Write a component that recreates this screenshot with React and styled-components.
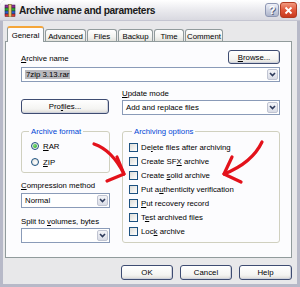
import React from "react";
import styled, { createGlobalStyle } from "styled-components";

const Global = createGlobalStyle`
  html, body {
    margin: 0;
    padding: 0;
    background: #ffffff;
    overflow: hidden;
  }
  body {
    font-family: "Liberation Sans", Arial, sans-serif;
    font-size: 7.8px;
    color: #000;
  }
`;

const Window = styled.div`
  position: relative;
  width: 300px;
  height: 287px;
  display: flex;
  flex-direction: column;
  background: #b7b9c8;
  border-radius: 6px 6px 0 0;
  overflow: hidden;
`;

const TitleBar = styled.div`
  height: 21px;
  display: flex;
  align-items: center;
  padding: 0 3px 0 4px;
  background: linear-gradient(#ffffff, #ececf0 45%, #d9d9e0);
  border-bottom: 1px solid #c4c5d1;
  box-sizing: border-box;
`;

const Title = styled.span`
  flex: 1;
  margin-left: 3px;
  font-size: 10.2px;
  font-weight: bold;
  color: #1a1a1a;
  letter-spacing: -0.35px;
`;

const CaptionButton = styled.div`
  width: ${(p) => p.$w}px;
  height: ${(p) => p.$h}px;
  margin-left: 1px;
  border-radius: 3px;
  box-sizing: border-box;
  display: flex;
  align-items: center;
  justify-content: center;
  border: 1px solid ${(p) => (p.$close ? "#b23b22" : "#8e97b3")};
  background: ${(p) =>
    p.$close
      ? "linear-gradient(#f19a80, #e0573a 50%, #c83a1f)"
      : "linear-gradient(#eef0f7, #c9cedf 55%, #aeb5cb)"};
  color: #fff;
  font-size: 11px;
  font-weight: bold;
  text-shadow: 1px 1px 0 #55607e;
`;

const Client = styled.div`
  flex: 1;
  margin: 0 3px 3px 3px;
  background: #e8e8ea;
  display: flex;
  flex-direction: column;
  padding: 4px 5px 0 2px;
`;

const TabStrip = styled.div`
  display: flex;
  align-items: flex-end;
  gap: 1px;
  padding-left: 2px;
  height: 16px;
  position: relative;
  z-index: 1;
`;

const Tab = styled.div`
  width: ${(p) => p.$w}px;
  height: ${(p) => (p.$active ? 16 : 12)}px;
  box-sizing: border-box;
  border: 1px solid #919b9c;
  border-bottom: none;
  border-radius: 3px 3px 0 0;
  display: flex;
  align-items: center;
  justify-content: center;
  background: ${(p) =>
    p.$active ? "#fcfcfe" : "linear-gradient(#ffffff, #f3f3f0 60%, #e2e2dc)"};
  border-top: ${(p) => (p.$active ? "2px solid #f5a63a" : "1px solid #919b9c")};
  margin-bottom: ${(p) => (p.$active ? -1 : 0)}px;
  padding-top: ${(p) => (p.$active ? 0 : 1)}px;
`;

const Panel = styled.div`
  height: 217px;
  box-sizing: border-box;
  border: 1px solid #919b9c;
  background: #fcfcfe;
  padding: 8px 11px 0 15px;
  display: flex;
  flex-direction: column;
`;

const TopRow = styled.div`
  display: flex;
  justify-content: space-between;
  align-items: flex-end;
`;

const Label = styled.div`
  line-height: 10px;
  height: 10px;
  margin-top: ${(p) => p.$mt || 0}px;
  white-space: nowrap;
`;

const Key = styled.span`
  text-decoration: underline;
`;

const Button = styled.div`
  width: ${(p) => p.$w || 52}px;
  height: ${(p) => p.$h || 15}px;
  margin-top: ${(p) => p.$mt || 0}px;
  box-sizing: border-box;
  border: 1px solid #3e4c72;
  border-radius: 3px;
  background: linear-gradient(#ffffff, #f4f4f2 70%, #dcdad4);
  box-shadow: inset -1px -1px 0 #cfd2dc;
  display: flex;
  align-items: center;
  justify-content: center;
  white-space: nowrap;
`;

const Combo = styled.div`
  height: 15px;
  margin-top: ${(p) => p.$mt || 0}px;
  box-sizing: border-box;
  border: 1px solid #8a9bb8;
  background: #fff;
  display: flex;
  align-items: center;
  padding: 1px;
`;

const ComboText = styled.div`
  flex: 1;
  padding-left: 2px;
  line-height: 11px;
  white-space: nowrap;
  overflow: hidden;
`;

const Selected = styled.span`
  background: #b9b9be;
  padding: 0 1px;
`;

const DropButton = styled.div`
  width: 11px;
  height: 11px;
  box-sizing: border-box;
  border: 1px solid #c0c4d2;
  border-radius: 2px;
  background: linear-gradient(#f3f4f8, #d9dce6);
  display: flex;
  align-items: center;
  justify-content: center;
`;

const Grid = styled.div`
  display: grid;
  grid-template-columns: 89px 158px;
  column-gap: 12px;
  margin-top: 7px;
  align-items: start;
`;

const Column = styled.div`
  display: flex;
  flex-direction: column;
`;

const Group = styled.fieldset`
  margin: 0;
  margin-top: ${(p) => p.$mt || 0}px;
  padding: ${(p) => p.$pad};
  border: 1px solid #d0d0bf;
  border-radius: 3px;
  min-width: 0;
`;

const Legend = styled.legend`
  color: #0046d5;
  line-height: 9px;
  padding: 0 2px;
  margin-left: 3px;
`;

const OptionRow = styled.div`
  height: ${(p) => p.$h}px;
  display: flex;
  align-items: center;
  gap: 3px;
  white-space: nowrap;
`;

const Radio = styled.div`
  width: 8px;
  height: 8px;
  margin-left: 5px;
  margin-right: 1px;
  box-sizing: border-box;
  border-radius: 50%;
  border: 1px solid #1c5180;
  background: radial-gradient(circle at 60% 60%, #ffffff, #dcdcd7);
  display: flex;
  align-items: center;
  justify-content: center;
  &::after {
    content: "";
    display: ${(p) => (p.$checked ? "block" : "none")};
    width: 4px;
    height: 4px;
    border-radius: 50%;
    background: radial-gradient(circle at 35% 35%, #7be37b, #1d9a1d);
  }
`;

const Check = styled.div`
  width: 9px;
  height: 9px;
  box-sizing: border-box;
  border: 1px solid #1c5180;
  background: linear-gradient(135deg, #dcdcd7, #ffffff);
`;

const ButtonRow = styled.div`
  display: flex;
  justify-content: flex-end;
  gap: 7px;
  margin-top: 7px;
`;

const Arrows = styled.svg`
  position: absolute;
  left: 0;
  top: 0;
  pointer-events: none;
`;

function Chevron() {
  return (
    <svg width="7" height="5" viewBox="0 0 7 5">
      <polyline points="1,1 3.5,3.5 6,1" fill="none" stroke="#2e3b5c" strokeWidth="1.6" />
    </svg>
  );
}

function ComboBox({ children, mt }) {
  return (
    <Combo $mt={mt}>
      <ComboText>{children}</ComboText>
      <DropButton>
        <Chevron />
      </DropButton>
    </Combo>
  );
}

function RarIcon() {
  return (
    <svg width="12" height="13" viewBox="0 0 12 13">
      <rect x="1" y="1" width="10" height="3" fill="#8b2e9a" stroke="#3c1045" strokeWidth="0.5" />
      <rect x="1" y="4" width="10" height="3" fill="#2fa33a" stroke="#134b18" strokeWidth="0.5" />
      <rect x="1" y="7" width="10" height="3" fill="#2f5fc9" stroke="#13285a" strokeWidth="0.5" />
      <rect x="1" y="10" width="10" height="2.5" fill="#d63a3a" stroke="#5a1313" strokeWidth="0.5" />
      <rect x="4.5" y="0.5" width="3" height="12.5" fill="#e6c770" stroke="#6b5520" strokeWidth="0.5" />
    </svg>
  );
}

const tabs = [
  { name: "General", w: 37, active: true },
  { name: "Advanced", w: 41 },
  { name: "Files", w: 30 },
  { name: "Backup", w: 35 },
  { name: "Time", w: 30 },
  { name: "Comment", w: 38 },
];

const options = [
  <>De<Key>l</Key>ete files after archiving</>,
  <>Create SF<Key>X</Key> archive</>,
  <>Create <Key>s</Key>olid archive</>,
  <>Put a<Key>u</Key>thenticity verification</>,
  <><Key>P</Key>ut recovery record</>,
  <>T<Key>e</Key>st archived files</>,
  <>Loc<Key>k</Key> archive</>,
];

export default function App() {
  return (
    <>
      <Global />
      <Window>
        <TitleBar>
          <RarIcon />
          <Title>Archive name and parameters</Title>
          <CaptionButton $w={14} $h={14}>?</CaptionButton>
          <CaptionButton $w={17} $h={16} $close>
            <svg width="9" height="9" viewBox="0 0 9 9">
              <path d="M1.5,1.5 L7.5,7.5 M7.5,1.5 L1.5,7.5" stroke="#fff" strokeWidth="1.8" />
            </svg>
          </CaptionButton>
        </TitleBar>
        <Client>
          <TabStrip>
            {tabs.map((t) => (
              <Tab key={t.name} $w={t.w} $active={t.active}>
                {t.name}
              </Tab>
            ))}
          </TabStrip>
          <Panel>
            <TopRow>
              <Label>
                <Key>A</Key>rchive name
              </Label>
              <Button $w={52} $h={14}>
                <Key>B</Key>rowse...
              </Button>
            </TopRow>
            <ComboBox mt={3}>
              <Selected>7zip 3.13.rar</Selected>
            </ComboBox>
            <Grid>
              <div />
              <Label>
                <Key>U</Key>pdate mode
              </Label>
              <Button $w={88} $mt={0}>
                Pro<Key>f</Key>iles...
              </Button>
              <ComboBox mt={1}>Add and replace files</ComboBox>
              <Column>
                <Group $mt={12} $pad="2px 4px 2px 4px">
                  <Legend>Archive format</Legend>
                  <OptionRow $h={16}>
                    <Radio $checked />
                    <span>
                      <Key>R</Key>AR
                    </span>
                  </OptionRow>
                  <OptionRow $h={16}>
                    <Radio />
                    <span>
                      <Key>Z</Key>IP
                    </span>
                  </OptionRow>
                </Group>
                <Label $mt={8}>
                  <Key>C</Key>ompression method
                </Label>
                <ComboBox mt={2}>Normal</ComboBox>
                <Label $mt={9}>
                  Split to <Key>v</Key>olumes, bytes
                </Label>
                <ComboBox mt={1}></ComboBox>
              </Column>
              <Group $mt={12} $pad="4px 6px 4px 6px">
                <Legend>Archiving options</Legend>
                {options.map((o, i) => (
                  <OptionRow key={i} $h={14}>
                    <Check />
                    <span>{o}</span>
                  </OptionRow>
                ))}
              </Group>
            </Grid>
          </Panel>
          <ButtonRow>
            <Button $w={52}>OK</Button>
            <Button $w={52}>Cancel</Button>
            <Button $w={53}>Help</Button>
          </ButtonRow>
        </Client>
        <Arrows width="300" height="287" viewBox="0 0 300 287">
          <g fill="none" stroke="#e3121b" strokeWidth="3.2" strokeLinecap="round" strokeLinejoin="round">
            <path d="M94,144 Q112,150 124,174" />
            <path d="M117,157 L124,174 L107,181" />
            <path d="M262,142 Q252,163 224,174" />
            <path d="M232,157 L224,174 L241,182" />
          </g>
        </Arrows>
      </Window>
    </>
  );
}
